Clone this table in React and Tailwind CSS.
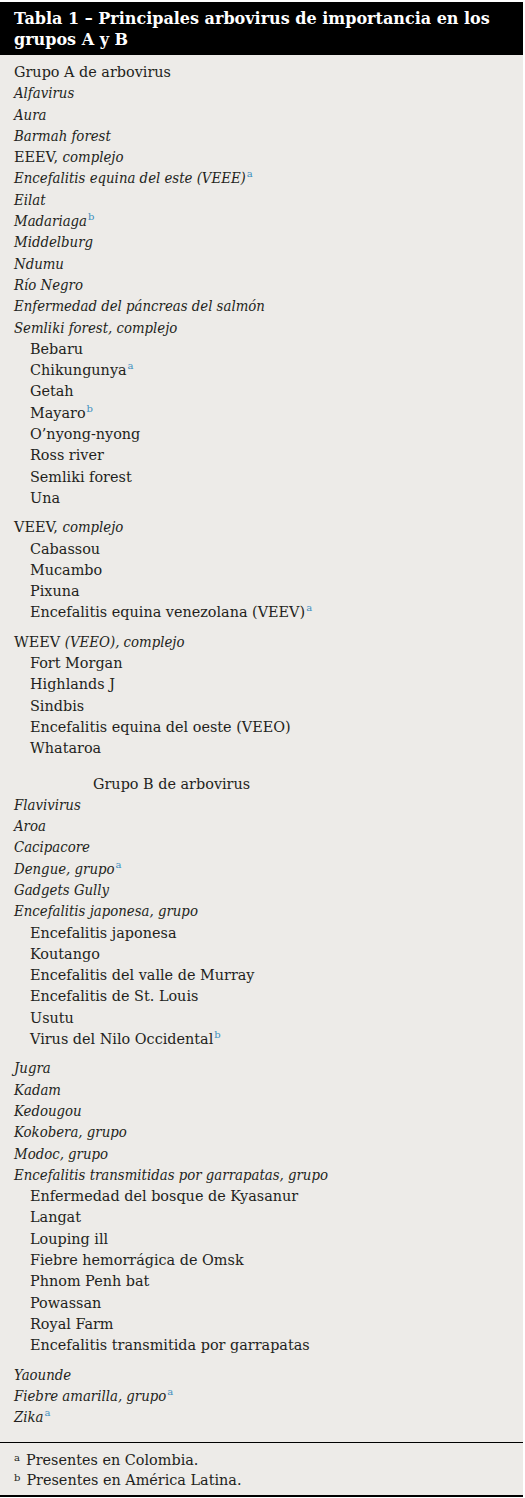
const I = ({ children }) => <em className="italic text-[14.8px] leading-none [font-stretch:condensed]">{children}</em>;
const Sup = ({ children }) => (
  <sup className="text-[10px] leading-none text-[#3d8fbf] ml-[1px] relative -top-[6px]">{children}</sup>
);

const rows = [
  { c: 'Grupo A de arbovirus' },
  { c: <I>Alfavirus</I> },
  { c: <I>Aura</I> },
  { c: <I>Barmah forest</I> },
  { c: <>EEEV, <I>complejo</I></> },
  { c: <><I>Encefalitis equina del este (VEEE)</I><Sup>a</Sup></> },
  { c: <I>Eilat</I> },
  { c: <><I>Madariaga</I><Sup>b</Sup></> },
  { c: <I>Middelburg</I> },
  { c: <I>Ndumu</I> },
  { c: <I>Río Negro</I> },
  { c: <I>Enfermedad del páncreas del salmón</I> },
  { c: <I>Semliki forest, complejo</I> },
  { c: 'Bebaru', ind: true },
  { c: <>Chikungunya<Sup>a</Sup></>, ind: true },
  { c: 'Getah', ind: true },
  { c: <>Mayaro<Sup>b</Sup></>, ind: true },
  { c: 'O’nyong-nyong', ind: true },
  { c: 'Ross river', ind: true },
  { c: 'Semliki forest', ind: true },
  { c: 'Una', ind: true },
  { c: <>VEEV, <I>complejo</I></>, gap: true },
  { c: 'Cabassou', ind: true },
  { c: 'Mucambo', ind: true },
  { c: 'Pixuna', ind: true },
  { c: <>Encefalitis equina venezolana (VEEV)<Sup>a</Sup></>, ind: true },
  { c: <>WEEV <I>(VEEO), complejo</I></>, gap: true },
  { c: 'Fort Morgan', ind: true },
  { c: 'Highlands J', ind: true },
  { c: 'Sindbis', ind: true },
  { c: 'Encefalitis equina del oeste (VEEO)', ind: true },
  { c: 'Whataroa', ind: true },
  { c: 'Grupo B de arbovirus', center: true },
  { c: <I>Flavivirus</I> },
  { c: <I>Aroa</I> },
  { c: <I>Cacipacore</I> },
  { c: <><I>Dengue, grupo</I><Sup>a</Sup></> },
  { c: <I>Gadgets Gully</I> },
  { c: <I>Encefalitis japonesa, grupo</I> },
  { c: 'Encefalitis japonesa', ind: true },
  { c: 'Koutango', ind: true },
  { c: 'Encefalitis del valle de Murray', ind: true },
  { c: 'Encefalitis de St. Louis', ind: true },
  { c: 'Usutu', ind: true },
  { c: <>Virus del Nilo Occidental<Sup>b</Sup></>, ind: true },
  { c: <I>Jugra</I>, gap: true },
  { c: <I>Kadam</I> },
  { c: <I>Kedougou</I> },
  { c: <I>Kokobera, grupo</I> },
  { c: <I>Modoc, grupo</I> },
  { c: <I>Encefalitis transmitidas por garrapatas, grupo</I> },
  { c: 'Enfermedad del bosque de Kyasanur', ind: true },
  { c: 'Langat', ind: true },
  { c: 'Louping ill', ind: true },
  { c: 'Fiebre hemorrágica de Omsk', ind: true },
  { c: 'Phnom Penh bat', ind: true },
  { c: 'Powassan', ind: true },
  { c: 'Royal Farm', ind: true },
  { c: 'Encefalitis transmitida por garrapatas', ind: true },
  { c: <I>Yaounde</I>, gap: true },
  { c: <><I>Fiebre amarilla, grupo</I><Sup>a</Sup></> },
  { c: <><I>Zika</I><Sup>a</Sup></> },
];

export default function App() {
  return (
    <div className="w-[525px] min-h-[1498px] bg-white pt-[2px] pr-[2px] text-[#231f20]" style={{ fontFamily: '"DejaVu Serif", serif' }}>
      <div className="bg-black text-white font-bold text-[16px] leading-[21px] px-[14px] pt-[6px] pb-[5px]">
        Tabla 1 – Principales arbovirus de importancia en los grupos A y B
      </div>
      <div className="bg-[#edebe8] pt-[7px]">
        <ul className="px-[14px] pb-[14px] text-[14.4px] leading-[21.3px]">
          {rows.map((r, i) => (
            <li
              key={i}
              className={
                'h-[21.3px] ' +
                (r.ind ? 'pl-[16px] ' : '') +
                (r.gap ? 'mt-[8px] ' : '') +
                (r.center ? 'mt-[14px] pl-[79px] ' : '')
              }
            >
              {r.c}
            </li>
          ))}
        </ul>
        <div className="border-t-[1.5px] border-black px-[14px] pt-[8px] pb-[4px] text-[14.4px] leading-[19px]">
          <p><span className="text-[10px] relative -top-[4px] mr-[6px]">a</span>Presentes en Colombia.</p>
          <p><span className="text-[10px] relative -top-[4px] mr-[6px]">b</span>Presentes en América Latina.</p>
        </div>
        <div className="border-b-2 border-black" />
      </div>
    </div>
  );
}
